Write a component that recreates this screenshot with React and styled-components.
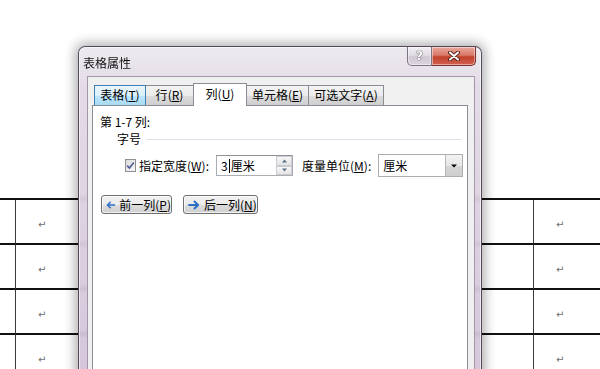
import React from "react";
import styled, { createGlobalStyle } from "styled-components";

const GlobalStyle = createGlobalStyle`
  html, body { margin: 0; padding: 0; background: #fff; overflow: hidden; }
  body { font-family: "Noto Sans CJK SC", "Noto Sans", sans-serif; }
`;

const Page = styled.div`
  position: relative;
  width: 600px;
  height: 369px;
  overflow: hidden;
  background: #fff;
  padding-top: 198px;
  box-sizing: border-box;
`;

// document table behind the dialog
const DocTable = styled.div`
  display: grid;
  grid-template-columns: 15px 518px 1fr;
  border-top: 2px solid #111;
`;

const Cell = styled.div`
  height: 45px;
  box-sizing: border-box;
  border-bottom: 2px solid #111;
  border-left: ${(p) => (p.$edge ? "none" : "1px solid #3a3a3a")};
  padding: 19px 0 0 22px;
  font-family: "DejaVu Sans", sans-serif;
  font-size: 10px;
  line-height: 11px;
  color: #6e6e6e;
`;

// dialog window
const Window = styled.div`
  position: absolute;
  left: 78px;
  top: 46px;
  width: 404px;
  height: 340px;
  box-sizing: border-box;
  border: 1px solid rgba(70, 60, 75, 0.9);
  border-radius: 7px 7px 0 0;
  background: linear-gradient(
    180deg,
    rgba(236, 233, 238, 0.95) 0px,
    rgba(224, 216, 228, 0.9) 40px,
    rgba(206, 188, 212, 0.86) 100%
  );
  backdrop-filter: blur(2px);
  box-shadow: 0 0 12px 3px rgba(0, 0, 0, 0.32),
    inset 0 0 0 1px rgba(255, 255, 255, 0.55);
  display: flex;
  flex-direction: column;
`;

const TitleBar = styled.div`
  height: 29px;
  display: flex;
  align-items: flex-start;
  padding-left: 4px;
  padding-right: 5px;
`;

const Title = styled.div`
  flex: 1;
  padding-top: 8px;
  font-size: 12px;
  line-height: 16px;
  color: #111;
`;

const CapBtn = styled.div`
  height: 19px;
  width: ${(p) => (p.$close ? "44px" : "25px")};
  box-sizing: border-box;
  border: 1px solid ${(p) => (p.$close ? "#7a3026" : "#7d7382")};
  border-top: none;
  border-left-width: ${(p) => (p.$close ? "0" : "1px")};
  border-radius: ${(p) => (p.$close ? "0 0 5px 0" : "0 0 0 5px")};
  background: ${(p) =>
    p.$close
      ? "linear-gradient(180deg, #e9a99d 0%, #d8796a 45%, #c2412d 55%, #d0624f 100%)"
      : "linear-gradient(180deg, #f1eef3 0%, #e2dce5 45%, #d0c8d4 55%, #dcd5df 100%)"};
  display: flex;
  align-items: center;
  justify-content: center;
  box-shadow: inset 0 0 0 1px rgba(255, 255, 255, 0.45);
`;

const HelpGlyph = styled.span`
  font-family: "DejaVu Sans", sans-serif;
  font-weight: bold;
  font-size: 12px;
  line-height: 12px;
  color: #fff;
  text-shadow: 0 0 1px #555, 0 0 1px #555, 0 0 1px #555;
`;

const Client = styled.div`
  flex: 1;
  margin: 0 6px 0 8px;
  background: #f0f0f0;
  border: 1px solid #a597a9;
  border-bottom: none;
  padding: 6px 6px 0 4px;
  display: flex;
  flex-direction: column;
`;

const TabStrip = styled.div`
  display: flex;
  align-items: flex-end;
  height: 22px;
  padding-left: 2px;
  position: relative;
  z-index: 1;
`;

const Tab = styled.div`
  width: ${(p) => p.$w}px;
  height: ${(p) => (p.$active ? 23 : 20)}px;
  margin-bottom: ${(p) => (p.$active ? -1 : 0)}px;
  margin-left: -1px;
  box-sizing: border-box;
  border: 1px solid ${(p) => (p.$hover ? "#3c7fb1" : "#898c95")};
  border-bottom: none;
  background: ${(p) =>
    p.$active
      ? "#fff"
      : p.$hover
      ? "linear-gradient(180deg, #eaf6fd 0%, #d9f0fc 50%, #bee6fd 51%, #a9daf6 100%)"
      : "linear-gradient(180deg, #f3f3f3 0%, #ebebeb 50%, #dddddd 51%, #cfcfcf 100%)"};
  font-size: 12px;
  line-height: ${(p) => (p.$active ? 20 : 18)}px;
  text-align: center;
  color: #000;
  position: relative;
  z-index: ${(p) => (p.$active ? 2 : p.$hover ? 1 : 0)};
  &:first-child { margin-left: 0; }
`;

const Panel = styled.div`
  flex: 1;
  background: #fff;
  border: 1px solid #898c95;
  border-bottom: none;
  padding: 8px 5px 0 7px;
  display: flex;
  flex-direction: column;
`;

const Text = styled.span`
  font-size: 12px;
  line-height: 16px;
  color: #000;
  white-space: nowrap;
  margin-left: ${(p) => p.$ml || 0}px;
`;

const GroupHead = styled.div`
  display: flex;
  align-items: center;
  gap: 5px;
  margin: 1px 0 0 17px;
  &::after {
    content: "";
    flex: 1;
    border-top: 1px solid #dde3ea;
  }
`;

const FieldRow = styled.div`
  display: flex;
  align-items: center;
  margin: 7px 0 0 25px;
  height: 23px;
`;

const Check = styled.div`
  width: 13px;
  height: 13px;
  box-sizing: border-box;
  border: 1px solid #8e8f8f;
  background: linear-gradient(135deg, #dcdcdc 0%, #f6f6f6 100%);
  display: flex;
  align-items: center;
  justify-content: center;
  margin-right: 3px;
`;

const TextBox = styled.div`
  display: flex;
  height: 21px;
  box-sizing: border-box;
  border: 1px solid #abadb3;
  border-top-color: #8e9196;
  background: #fff;
  margin-left: ${(p) => p.$ml}px;
`;

const BoxValue = styled.div`
  width: ${(p) => p.$w}px;
  padding-left: 4px;
  box-sizing: border-box;
  font-size: 12px;
  line-height: 19px;
  color: #000;
  display: flex;
  align-items: center;
  white-space: nowrap;
`;

const Caret = styled.span`
  display: inline-block;
  width: 1px;
  height: 14px;
  background: #000;
  margin: 0 1px 0 1px;
`;

const Spin = styled.div`
  width: 16px;
  display: flex;
  flex-direction: column;
`;

const SpinHalf = styled.div`
  flex: 1;
  box-sizing: border-box;
  border: 1px solid #c9ccd2;
  background: linear-gradient(180deg, #f7f7f7, #e4e4e4);
  display: flex;
  align-items: center;
  justify-content: center;
`;

const SelectBox = styled.div`
  display: flex;
  width: 85px;
  height: 23px;
  box-sizing: border-box;
  border: 1px solid #abadb3;
  background: #fff;
  margin-left: 7px;
`;

const DropBtn = styled.div`
  width: 16px;
  border-left: 1px solid #b5b7bd;
  background: linear-gradient(180deg, #f3f3f3 0%, #e6e6e6 50%, #d6d6d6 51%, #cfcfcf 100%);
  display: flex;
  align-items: center;
  justify-content: center;
`;

const ButtonRow = styled.div`
  display: flex;
  gap: 11px;
  margin: 18px 0 0 1px;
`;

const PushBtn = styled.div`
  width: ${(p) => p.$w}px;
  height: 19px;
  box-sizing: border-box;
  border: 1px solid #707070;
  border-radius: 3px;
  background: linear-gradient(180deg, #f2f2f2 0%, #ebebeb 50%, #dddddd 51%, #cfcfcf 100%);
  box-shadow: inset 0 0 0 1px rgba(255, 255, 255, 0.7);
  display: flex;
  align-items: center;
  padding-left: 4px;
  gap: 4px;
`;

const Arrow = ({ dir }) => (
  <svg width="12" height="10" viewBox="0 0 12 10">
    <g
      transform={dir === "right" ? "translate(12 0) scale(-1 1)" : undefined}
      fill="none"
      stroke="#2f6fc4"
      strokeWidth="2"
      strokeLinecap="round"
      strokeLinejoin="round"
    >
      <path d="M11 5 H2" />
      <path d="M5.5 1.5 L2 5 L5.5 8.5" />
    </g>
  </svg>
);

const Tri = ({ up, color = "#5b6f8c", w = 5 }) => (
  <svg width={w + 2} height="4" viewBox={`0 0 ${w + 2} 4`}>
    <path
      d={up ? `M1 3.5 L${(w + 2) / 2} 0.5 L${w + 1} 3.5 Z` : `M1 0.5 L${(w + 2) / 2} 3.5 L${w + 1} 0.5 Z`}
      fill={color}
    />
  </svg>
);

const rows = [0, 1, 2, 3];
const tabs = [
  { label: "表格", key: "T", w: 52, hover: true },
  { label: "行", key: "R", w: 49 },
  { label: "列", key: "U", w: 54, active: true },
  { label: "单元格", key: "E", w: 63 },
  { label: "可选文字", key: "A", w: 76 },
];

export default function App() {
  return (
    <Page>
      <GlobalStyle />
      <DocTable>
        {rows.map((r) => (
          <React.Fragment key={r}>
            <Cell $edge />
            <Cell>↵</Cell>
            <Cell>↵</Cell>
          </React.Fragment>
        ))}
      </DocTable>

      <Window>
        <TitleBar>
          <Title>表格属性</Title>
          <CapBtn>
            <HelpGlyph>?</HelpGlyph>
          </CapBtn>
          <CapBtn $close>
            <svg width="14" height="10" viewBox="0 0 14 10">
              <path d="M3 1.5 L11 8.5 M11 1.5 L3 8.5" stroke="#5a241c" strokeWidth="4" strokeLinecap="round" />
              <path d="M3 1.5 L11 8.5 M11 1.5 L3 8.5" stroke="#fff" strokeWidth="2" strokeLinecap="round" />
            </svg>
          </CapBtn>
        </TitleBar>

        <Client>
          <TabStrip>
            {tabs.map((t) => (
              <Tab key={t.key} $w={t.w} $active={t.active} $hover={t.hover}>
                {t.label}(<u>{t.key}</u>)
              </Tab>
            ))}
          </TabStrip>
          <Panel>
            <Text>第 1-7 列:</Text>
            <GroupHead>
              <Text>字号</Text>
            </GroupHead>
            <FieldRow>
              <Check>
                <svg width="9" height="9" viewBox="0 0 9 9">
                  <path d="M1.2 4.6 L3.4 7 L7.8 1.4" fill="none" stroke="#4a5d8f" strokeWidth="1.6" />
                </svg>
              </Check>
              <Text>
                指定宽度(<u>W</u>):
              </Text>
              <TextBox $ml={7}>
                <BoxValue $w={59}>
                  3<Caret />厘米
                </BoxValue>
                <Spin>
                  <SpinHalf>
                    <Tri up />
                  </SpinHalf>
                  <SpinHalf>
                    <Tri />
                  </SpinHalf>
                </Spin>
              </TextBox>
              <Text $ml={9}>
                度量单位(<u>M</u>):
              </Text>
              <SelectBox>
                <BoxValue $w={67}>厘米</BoxValue>
                <DropBtn>
                  <Tri color="#000" w={6} />
                </DropBtn>
              </SelectBox>
            </FieldRow>
            <ButtonRow>
              <PushBtn $w={71}>
                <Arrow dir="left" />
                <Text>
                  前一列(<u>P</u>)
                </Text>
              </PushBtn>
              <PushBtn $w={75}>
                <Arrow dir="right" />
                <Text>
                  后一列(<u>N</u>)
                </Text>
              </PushBtn>
            </ButtonRow>
          </Panel>
        </Client>
      </Window>
    </Page>
  );
}
